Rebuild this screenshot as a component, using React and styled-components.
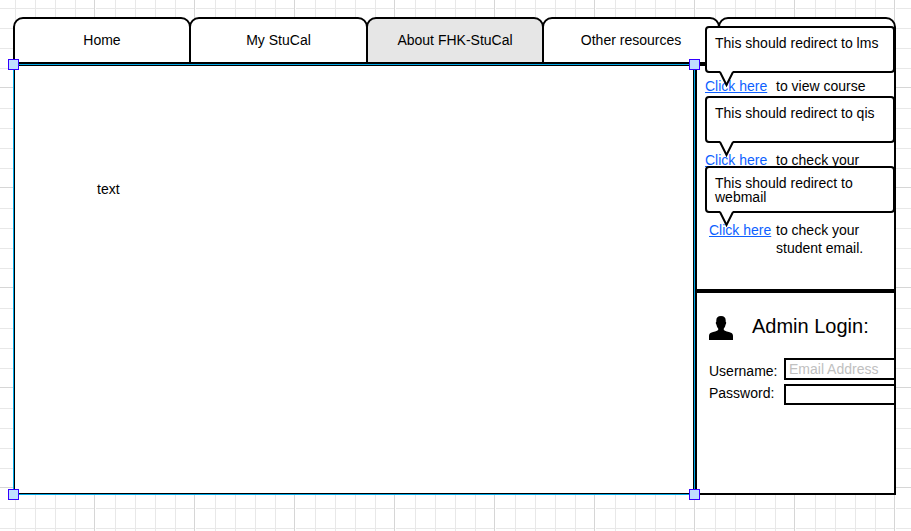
import React from "react";
import styled, { createGlobalStyle } from "styled-components";

const GlobalStyle = createGlobalStyle`
  * { box-sizing: border-box; }
  body {
    margin: 0;
    overflow: hidden;
    background: #fff;
    color: #000;
    font-family: "Liberation Sans", Arial, sans-serif;
    font-size: 14px;
  }
`;

const Canvas = styled.div`
  width: 911px;
  height: 531px;
  padding: 17px 15px 0 13px;
  background-color: #fff;
  background-image:
    linear-gradient(90deg, #d6d6d6 1px, #fff 1px, #fff 2px, transparent 2px),
    linear-gradient(#d6d6d6 1px, #fff 1px, #fff 2px, transparent 2px),
    linear-gradient(90deg, #e8e8e8 1px, transparent 1px),
    linear-gradient(#e8e8e8 1px, transparent 1px);
  background-size: 100px 100px, 100px 100px, 20px 20px, 20px 20px;
  background-position: 94px 0, 0 87px, 15px 0, 0 8px;
`;

const Tabs = styled.nav`
  display: grid;
  grid-template-columns: 176px 177px 176px 176px 178px;
  height: 47px;
`;

const Tab = styled.div`
  display: flex;
  align-items: center;
  justify-content: center;
  margin-right: ${(p) => (p.$last ? 0 : "-2px")};
  padding-bottom: 2px;
  border: 2px solid #000;
  border-radius: 10px 10px 0 0;
  background: ${(p) => (p.$active ? "#e6e6e6" : "#fff")};
`;

const Body = styled.div`
  display: grid;
  grid-template-columns: 682px 201px;
  height: 431px;
`;

const Content = styled.main`
  position: relative;
  padding: 115px 0 0 83px;
  border: 1px solid #00a8e8;
  box-shadow: inset 0 0 0 1px #000;
  background: #fff;
  line-height: 18px;
`;

const Handle = styled.span`
  position: absolute;
  z-index: 3;
  width: 11px;
  height: 11px;
  border: 1px solid #3300ff;
  background: #bfdfff;
  ${(p) => p.$v}: -6px;
  ${(p) => p.$h}: -6px;
`;

const Sidebar = styled.aside`
  display: grid;
  grid-template-rows: 227px 204px;
`;

const Links = styled.section`
  position: relative;
  border: 2px solid #000;
  background: #fff;
  padding: 11px 0 0 8px;
  line-height: 18px;
`;

const LinkRow = styled.div`
  display: grid;
  grid-template-columns: 71px 1fr;
  height: ${(p) => p.$height}px;
`;

const Link = styled.a`
  color: #0d5fff;
  text-decoration: underline;
  padding-left: ${(p) => (p.$indent ? 4 : 0)}px;
`;

const Callout = styled.div`
  position: absolute;
  left: 8px;
  top: ${(p) => p.$top}px;
  width: 190px;
  height: 47px;
  padding: 8px;
  border: 2px solid #000;
  border-radius: 4px;
  background: #fff;
  line-height: 14px;
`;

const PointerSvg = styled.svg`
  position: absolute;
  left: 11px;
  top: 43px;
`;

const Login = styled.section`
  border: 2px solid #000;
  background: #fff;
  padding: 23px 0 0 12px;
`;

const LoginTitle = styled.h2`
  display: flex;
  align-items: center;
  gap: 19px;
  margin: 0 0 18px;
  height: 24px;
  font-size: 20px;
  font-weight: 400;
`;

const TitleText = styled.span`
  padding-bottom: 4px;
`;

const Field = styled.label`
  display: grid;
  grid-template-columns: 75px 110px;
  height: 26px;
  line-height: ${(p) => p.$line}px;
`;

const Input = styled.input`
  height: ${(p) => p.$height}px;
  min-width: 0;
  border: 2px solid #000;
  border-right: 0;
  border-radius: 0;
  padding: 0 3px;
  background: #fff;
  font: inherit;
  outline: none;
  &::placeholder { color: #c0c0c0; opacity: 1; }
`;

const tabs = ["Home", "My StuCal", "About FHK-StuCal", "Other resources", ""];

function Note({ top, children }) {
  return (
    <Callout $top={top}>
      {children}
      <PointerSvg width="18" height="18" viewBox="0 0 18 18">
        <path d="M2 0 L8.5 13 L15 0Z" fill="#fff" />
        <path d="M2 1 L8.5 14 L15 1" fill="none" stroke="#000" strokeWidth="2" />
      </PointerSvg>
    </Callout>
  );
}

function Person() {
  return (
    <svg width="24" height="24" viewBox="0 0 24 24">
      <path d="M12 0C8.8 0 7.3 1.6 7.3 4.6V5.8C6.5 6 6.7 8.2 7.5 8.7C7.8 10.4 8.4 11.6 9.2 12.4V14C8.2 15.4 4.5 15.6 2 16.7C.6 17.3 0 18.4 0 20V24H24V20C24 18.4 23.4 17.3 22 16.7C19.5 15.6 15.8 15.4 14.8 14V12.4C15.6 11.6 16.2 10.4 16.5 8.7C17.3 8.2 17.5 6 16.7 5.8V4.6C16.7 1.6 15.2 0 12 0Z" />
    </svg>
  );
}

export default function App() {
  return (
    <>
      <GlobalStyle />
      <Canvas>
        <Tabs>
          {tabs.map((label, i) => (
            <Tab key={i} $active={i === 2} $last={i === 4}>{label}</Tab>
          ))}
        </Tabs>
        <Body>
          <Content>
            text
            <Handle $v="top" $h="left" />
            <Handle $v="top" $h="right" />
            <Handle $v="bottom" $h="left" />
            <Handle $v="bottom" $h="right" />
          </Content>
          <Sidebar>
            <Links>
              <LinkRow $height={74}><Link>Click here</Link><span>to view course</span></LinkRow>
              <LinkRow $height={70}><Link>Click here</Link><span>to check your</span></LinkRow>
              <LinkRow $height={36}><Link $indent>Click here</Link><span>to check your student email.</span></LinkRow>
              <Note top={-40}>This should redirect to lms</Note>
              <Note top={30}>This should redirect to qis</Note>
              <Note top={100}>This should redirect to webmail</Note>
            </Links>
            <Login>
              <LoginTitle><Person /><TitleText>Admin Login:</TitleText></LoginTitle>
              <Field $line={26}>Username:<Input $height={22} placeholder="Email Address" /></Field>
              <Field $line={18}>Password:<Input $height={21} /></Field>
            </Login>
          </Sidebar>
        </Body>
      </Canvas>
    </>
  );
}
